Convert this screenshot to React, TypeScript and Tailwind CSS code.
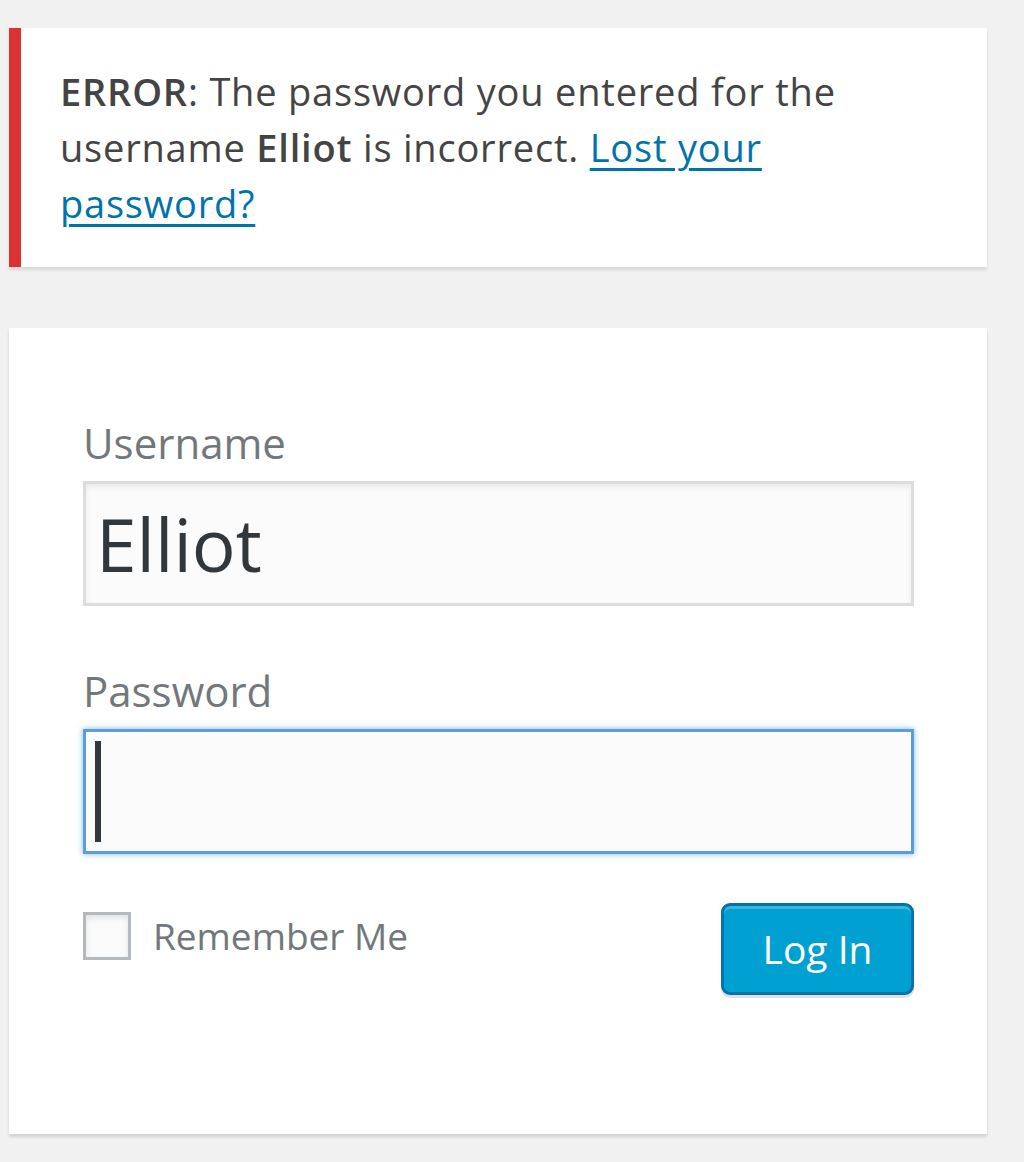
import React from "react";

const font = { fontFamily: '"Open Sans", "Noto Sans", sans-serif' };

const LoginError = () => {
  return (
    <div className="flex border-l-[12px] border-[#dc3232] bg-white pt-[35px] pb-[36px] pl-[39px] pr-[44px] shadow-[0_3px_3px_rgba(0,0,0,0.1)]">
      <p className="text-[38px] leading-[56px] tracking-[0.8px] text-[#444]">
        <strong className="font-semibold">ERROR</strong>: The password you
        entered for the username <strong className="font-semibold">Elliot</strong>{" "}
        is incorrect.{" "}
        <a href="#" className="text-[#0073aa] underline decoration-[3px] underline-offset-[6px]">
          Lost your password?
        </a>
      </p>
    </div>
  );
};

const LoginForm = () => {
  return (
    <div className="flex flex-col bg-white pt-[90px] pb-[139px] pl-[74px] pr-[73px] shadow-[0_3px_3px_rgba(0,0,0,0.13)]">
      <label className="text-[42px] leading-[50px] text-[#72777c]">Username</label>
      <div className="mt-[13px] flex h-[125px] items-center border-[3px] border-[#ddd] bg-[#fbfbfb] px-[10px] shadow-[inset_0_3px_6px_rgba(0,0,0,0.07)]">
        <span className="text-[73px] leading-none text-[#32373c]">Elliot</span>
      </div>

      <label className="mt-[60px] text-[42px] leading-[50px] text-[#72777c]">Password</label>
      <div className="mt-[13px] flex h-[125px] items-center border-[3px] border-[#5b9dd9] bg-[#fbfbfb] px-[9px] shadow-[0_0_6px_rgba(30,140,190,0.6)]">
        <div className="h-[101px] w-[6px] bg-[#32373c]" />
      </div>

      <div className="mt-[49px] flex items-start justify-between">
        <label className="mt-[9px] flex items-center gap-[22px]">
          <span className="h-[48px] w-[48px] border-[3px] border-[#b4b9be] bg-[#fbfbfb] shadow-[inset_0_3px_6px_rgba(0,0,0,0.1)]" />
          <span className="text-[37px] leading-[48px] text-[#72777c]">Remember Me</span>
        </label>
        <button className="flex h-[92px] w-[193px] items-center justify-center rounded-[9px] border-[3px] border-[#0073aa] bg-[#00a0d2] text-[39px] text-white shadow-[inset_0_3px_0_rgba(120,200,230,0.5),0_3px_0_rgba(0,0,0,0.12)]">
          Log In
        </button>
      </div>
    </div>
  );
};

export default function App() {
  return (
    <div className="min-h-screen bg-[#f1f1f1]" style={font}>
      <div className="ml-[9px] flex w-[978px] flex-col gap-[61px] pt-[28px]">
        <LoginError />
        <LoginForm />
      </div>
    </div>
  );
}
